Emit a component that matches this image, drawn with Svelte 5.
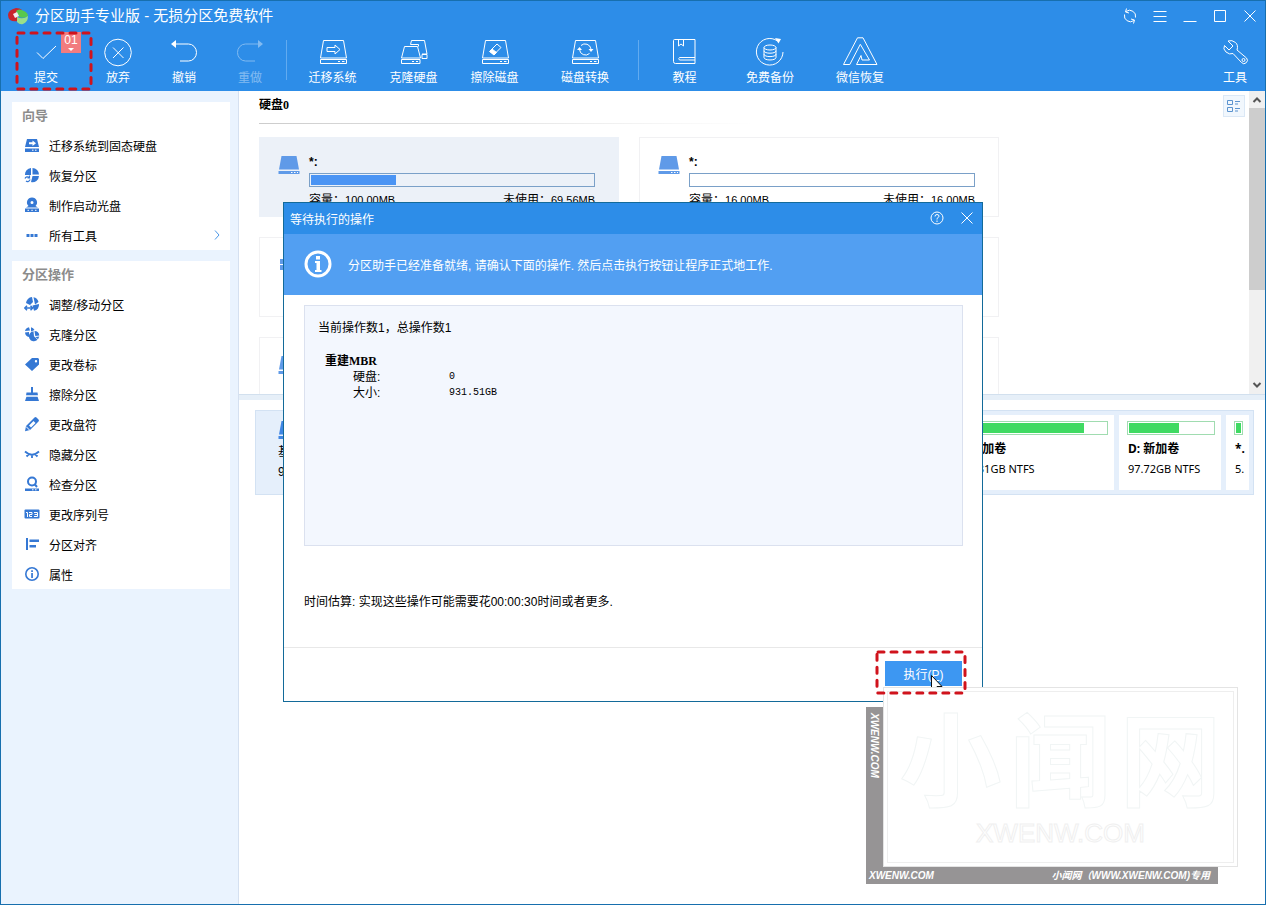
<script lang="ts">
  type Tool = { label: string; icon: string; size?: string; disabled?: boolean };

  const diskOutline = '<path d="M5.500 3.500h20l3 17.500h-26z"/><path d="M2.500 22.500h26v4h-26z"/><path d="M20 24.500h2M24 24.500h2.500"/>';

  const editTools: Tool[] = [
    { label: '放弃', icon: '<circle cx="15" cy="15.500" r="13.300"/><path d="M10 10.500l10.500 10.500M20.500 10.500L10 21"/>' },
    { label: '撤销', icon: '<path d="M5 7h14.500a8 8.500 0 0 1 0 17H11"/><path d="M2 7l5-4v8z" fill="#fff" stroke="none"/>' },
    { label: '重做', disabled: true, icon: '<path d="M25 7H10.500a8 8.500 0 0 0 0 17H20"/><path d="M28 7l-5-4v8z" fill="#fff" stroke="none"/>' },
  ];

  const diskTools: Tool[] = [
    { label: '迁移系统', size: 'medium', icon: diskOutline + '<path d="M9 10.500h8V8l5 4.500-5 4.500v-2.500H9z"/>' },
    { label: '克隆硬盘', size: 'medium', icon: '<path d="M5.500 9.500h13l3 11.500h-19z"/><path d="M2.500 22.500h18.500v4H2.500zM13 24.500h2M17 24.500h2"/><path d="M11.500 7.500l1-4h13l2.500 13.500h-5M19.500 9.500v-2h-8M23 17.500h5v4h-5z"/>' },
    { label: '擦除磁盘', size: 'medium', icon: diskOutline + '<path d="M10 14l7-7 4 3.500-7 7z"/><path d="M12 12l4.500 3.500-2.500 2.500-4.500-3.500z" fill="#fff"/>' },
    { label: '磁盘转换', size: 'wide', icon: diskOutline + '<path d="M11 8.500a6 6 0 0 1 10 3.500M19.500 16.500a6 6 0 0 1-10-4"/><path d="M18.500 12h5L21 15zM7 13l2.500-3 2.500 3z" fill="#fff" stroke="none"/>' },
  ];

  const helpTools: Tool[] = [
    { label: '教程', size: 'medium', icon: '<path d="M3.500 3.500q0-1 1-1h20.500v24H5.500q-2 0-2-2zM8.500 3v6l2.500-2 2.500 2V3M25 20.500H9.500q-1.500 1.200 0 2.500H25"/>' },
    { label: '免费备份', size: 'broad', icon: '<path d="M28 15A13.300 13.300 0 1 1 22.500 4"/><path d="M20 1l6 1-2.500 4.500z" fill="#fff" stroke="none"/><ellipse cx="15" cy="10.500" rx="6" ry="2.500"/><path d="M9 10.500v10c0 3.300 12 3.300 12 0v-10M9 13.800c0 3.200 12 3.200 12 0M9 17.200c0 3.200 12 3.200 12 0"/>' },
    { label: '微信恢复', size: 'broad', icon: '<path d="M12.500.8h5.500l14 26.700H11.500l4.500-9 1 4.500h7.500L15.300 7.300 4.800 27.500H-1.500z"/>' },
  ];

  const wizards = [
    { label: '迁移系统到固态硬盘', icon: '<path d="M3 2h10l2 8H1zM1 11.500h14v3.500H1z"/><path d="M5 5.300h3.500V3.500L12 6.300 8.500 9V7.300H5z" fill="#fff"/><path d="M8 13.200h1.500M11 13.200h1.500" stroke="#fff"/>' },
    { label: '恢复分区', icon: '<path d="M7 1v7H1A6.500 6.500 0 0 1 7 1zM8.500 1A6.500 6.500 0 0 1 15 7.500H8.500zM15 9a6.500 6.500 0 0 1-8 6l1.500-6z"/><path d="M1 11.500a2.500 2.500 0 0 1 4-1M6 12.500a2.500 2.500 0 0 1-4 1.500M5.500 8.500v2.500H3.500" fill="none" stroke="#3578d4" stroke-width="1.200"/>' },
    { label: '制作启动光盘', icon: '<path fill-rule="evenodd" d="M8 .5a5 5 0 0 1 3.500 8.600L14 10.500H2l2.500-1.400A5 5 0 0 1 8 .5zM8 4a1.500 1.500 0 1 0 0 3 1.500 1.500 0 0 0 0-3zM1 11.500h14V15H1z"/><path d="M3.500 13.300h1.500M7.300 13.300h1.500M11 13.300h1.500" stroke="#fff"/>' },
    { label: '所有工具', arrow: true, icon: '<path d="M2.500 7h3v3h-3zM6.500 7h3v3h-3zM10.500 7h3v3h-3z"/>' },
  ];

  const operations = [
    { label: '调整/移动分区', icon: '<path d="M2 7a6.500 6.500 0 0 1 6-6l1 5-3 3zM9.500 1.200A6.500 6.500 0 0 1 14.500 6L11 8.500zM15 8a6.500 6.500 0 0 1-5 6.800L8.500 9.500z"/><path d="M1 12h7M3 9.800L.8 12 3 14.200M6.500 9.800L8.700 12l-2.200 2.200" fill="none" stroke="#3578d4" stroke-width="1.500"/>' },
    { label: '克隆分区', icon: '<path d="M1 5a5 5 0 0 1 4-3.700l1 3.200zM7 1.300A5 5 0 0 1 10.500 4L7 5.500zM1 6.500L5 6v5A5 5 0 0 1 1 6.500zM10.500 5a5 5 0 0 1 4.800 4.500l-4 .5zM9.500 5.300l.5 5 3.500 3.500A5 5 0 1 1 9.500 5.300zM11.300 11l4-.5-1.300 2.700z"/>' },
    { label: '更改卷标', icon: '<path fill-rule="evenodd" d="M8 2h6l1 1v5.500l-7 6.500L1 8.500zM12 4a1.200 1.200 0 1 0 0 2.400A1.200 1.200 0 0 0 12 4z"/>' },
    { label: '擦除分区', icon: '<path d="M7 1h2v5.500h4.500l.5 3H2l.5-3H7zM2.500 10.500h11L15 15H1z"/><path d="M1.500 10h13" stroke="#fff"/>' },
    { label: '更改盘符', icon: '<path fill-rule="evenodd" d="M10.500 1.500Q11.500.5 12.500 1.500l2 2q1 1 0 2l-8.500 8.500-5 1.300 1-5.300zM9.500 5L5 9.500l2 2L11.500 7z"/><path d="M2 10.500L5.500 14" stroke="#fff"/>' },
    { label: '隐藏分区', icon: '<path d="M1 5.500q7 6.500 14 0M4.500 8.500l-2 2M11.500 8.500l2 2M8 9v3" fill="none" stroke="#3578d4" stroke-width="1.800"/>' },
    { label: '检查分区', icon: '<circle cx="8" cy="5.500" r="4" fill="none" stroke="#3578d4" stroke-width="2"/><path d="M10.500 8l2.500 3" stroke="#3578d4" stroke-width="2"/><path d="M1 12.500h14V15H1z"/><path d="M8 13.800h1.500M11 13.800h1.500" stroke="#fff"/>' },
    { label: '更改序列号', icon: '<rect x="0.500" y="3.500" width="15" height="9" rx="1"/><path d="M2 6.500h1.500V11M5 6.500h3v2H5.500v2H8M10 6.500h3.500v4H10M10.500 8.500h3" fill="none" stroke="#fff"/>' },
    { label: '分区对齐', icon: '<path d="M2 2h2v12H2zM5.500 3.500H15V6H5.500zM5.500 9H12v2.500H5.500z"/>' },
    { label: '属性', icon: '<circle cx="8" cy="8" r="6.200" fill="none" stroke="#3578d4" stroke-width="1.600"/><path d="M7.200 4.200h1.700v1.700H7.200zM7.200 7h1.700v5H7.200z"/>' },
  ];

  const cards = [
    { name: '*:', total: '100.00MB', free: '69.56MB', used: 30, selected: true },
    { name: '*:', total: '16.00MB', free: '16.00MB', used: 0 },
    { system: true },
    {},
    {},
    {},
  ];

  const partitions = [
    { name: 'C: 新加卷', size: '833.31GB NTFS', used: 85, kind: 'large' },
    { name: 'D: 新加卷', size: '97.72GB NTFS', used: 60, kind: 'middle' },
    { name: '*.', size: '5.', used: 100, kind: 'tiny' },
  ];
</script>

{#snippet toolButton(tool: Tool)}
  <button class="tool {tool.size ?? ''}" disabled={tool.disabled}>
    <svg viewBox="0 0 30 30" aria-hidden="true">{@html tool.icon}</svg>
    <span>{tool.label}</span>
  </button>
{/snippet}

{#snippet driveIcon()}
  <svg class="drive" viewBox="0 0 22 18" aria-hidden="true">
    <path d="M3.500 0h15L21 13.500H1zM.5 15h21v3H.5z" />
    <path d="M13 16.500h1.500M16 16.500h1.500M19 16.500h1" stroke="#fff" />
  </svg>
{/snippet}

{#snippet marker()}
  <svg class="marker" aria-hidden="true"><rect x="2" y="2" rx="1" /></svg>
{/snippet}

<div class="app">
  <header>
    <div class="titlebar">
      <svg class="logo" viewBox="0 0 20 18" aria-hidden="true">
        <path d="M0 8q0-5 8-7 4 0 6 2L9 8l1 6q-5 1-8-1Q0 11 0 8z" fill="#c9252c" />
        <path d="M8 4q3-3 8 0 4 2 4 5-4 3-9 1z" fill="#58c84c" />
        <path d="M9 10q6 3 11-1 0 6-5 8-3 1-6-2z" fill="#9adf8a" />
        <path d="M5 7l4-2 2 4-4 2z" fill="#f3eeee" />
      </svg>
      <h1>分区助手专业版 - 无损分区免费软件</h1>
      <div class="window-controls">
        <button aria-label="刷新"><svg viewBox="0 0 16 16"><path d="M4 3.500a6 6 0 0 1 9.500 6M2.500 6.500a6 6 0 0 0 9.500 6M4.500.5L3.500 4l3.500 1M11.500 15.500l1-3.500-3.500-1" /></svg></button>
        <button aria-label="菜单"><svg viewBox="0 0 16 16"><path d="M1.500 3.500h13M1.500 8.500h13M1.500 13.500h13" /></svg></button>
        <button aria-label="最小化"><svg viewBox="0 0 16 16"><path d="M1.500 13.500h13" /></svg></button>
        <button aria-label="最大化"><svg viewBox="0 0 16 16"><path d="M2.500 2.500h11v11h-11z" /></svg></button>
        <button aria-label="关闭"><svg viewBox="0 0 16 16"><path d="M2.500 2.500l11 11M13.500 2.500l-11 11" /></svg></button>
      </div>
    </div>

    <nav class="toolbar">
      <button class="tool commit">
        <svg viewBox="0 0 30 30" aria-hidden="true"><path d="M6 15.500l6 6L25 9" /></svg>
        <span>提交</span>
        <b class="badge">01<svg viewBox="0 0 8 4"><path d="M0 0h8L4 4z" /></svg></b>
        {@render marker()}
      </button>
      {#each editTools as tool}{@render toolButton(tool)}{/each}
      <i class="separator"></i>
      {#each diskTools as tool}{@render toolButton(tool)}{/each}
      <i class="separator"></i>
      {#each helpTools as tool}{@render toolButton(tool)}{/each}
      <button class="tool settings">
        <svg viewBox="0 0 30 30" aria-hidden="true">
          <path d="M8 4l5 5-4 4-4.500-4.500Q2.500 12 6 15q3.500 3 7 1.500L21.500 25.500a3.200 3.200 0 0 0 5-4.500L17 13q1.500-5-1.500-7.500Q12 2.500 8 4z" />
          <circle cx="23.500" cy="23" r="1.500" />
        </svg>
        <span>工具</span>
      </button>
    </nav>
  </header>

  <div class="body">
    <aside>
      <section>
        <h2>向导</h2>
        {#each wizards as item}
          <button class="side-item">
            <svg viewBox="0 0 16 16" aria-hidden="true">{@html item.icon}</svg>
            {item.label}
            {#if item.arrow}<svg class="arrow" viewBox="0 0 6 10" aria-hidden="true"><path d="M1 .5L5 5 1 9.500" /></svg>{/if}
          </button>
        {/each}
      </section>
      <section>
        <h2>分区操作</h2>
        {#each operations as item}
          <button class="side-item">
            <svg viewBox="0 0 16 16" aria-hidden="true">{@html item.icon}</svg>
            {item.label}
          </button>
        {/each}
      </section>
    </aside>

    <main>
      <div class="volumes">
        <div class="volume-list">
          <div class="volume-head">
            <h3>硬盘0</h3>
            <button class="view-toggle" aria-label="切换视图">
              <svg viewBox="0 0 16 16"><path d="M1.500 2.500h5v4h-5zM1.500 9.500h5v4h-5zM9 3.500h5M9 6h3M9 10.500h5M9 13h3" /></svg>
            </button>
          </div>
          <hr />
          <div class="cards">
            {#each cards as card}
              <article class:selected={card.selected}>
                {#if card.system}
                  <svg class="drive" viewBox="0 0 22 18" aria-hidden="true"><path d="M2 3h5v5H2zM8 2h7v6H8zM2 9h5v5H2zM8 9h7v6H8z" /></svg>
                {:else}
                  {@render driveIcon()}
                {/if}
                {#if card.name}
                  <div class="info">
                    <b>{card.name}</b>
                    <div class="meter"><i style="width: {card.used}%"></i></div>
                    <p>
                      <span>容量：<small>{card.total}</small></span>
                      <span>未使用：<small>{card.free}</small></span>
                    </p>
                  </div>
                {/if}
              </article>
            {/each}
          </div>
        </div>
        <div class="scrollbar">
          <button aria-label="向上"><svg viewBox="0 0 10 6"><path d="M1.500 5L5 1.500 8.500 5" /></svg></button>
          <i class="thumb"></i>
          <button class="down" aria-label="向下"><svg viewBox="0 0 10 6"><path d="M1.500 1L5 4.500 8.500 1" /></svg></button>
        </div>
      </div>

      <div class="splitter"></div>

      <div class="map-pane">
        <div class="disk-map">
          <div class="disk">
            {@render driveIcon()}
            <strong>基本</strong>
            <span>931.51GB</span>
          </div>
          {#each partitions as part}
            <div class="partition {part.kind}">
              <div class="meter green"><i style="width: {part.used}%"></i></div>
              <b>{part.name}</b>
              <span>{part.size}</span>
            </div>
          {/each}
        </div>
      </div>
    </main>
  </div>

  <div class="overlay">
    <div class="dialog" role="dialog" aria-labelledby="dialog-title">
      <div class="dialog-title">
        <h2 id="dialog-title">等待执行的操作</h2>
        <button aria-label="帮助"><svg viewBox="0 0 16 16"><circle cx="8" cy="8" r="6" /><path d="M6 6.500q0-2 2-2t2 1.700q0 1-2 2.300v1M8 10.500V12" /></svg></button>
        <button aria-label="关闭"><svg viewBox="0 0 16 16"><path d="M2.500 2.500l11 11M13.500 2.500l-11 11" /></svg></button>
      </div>
      <div class="banner">
        <svg viewBox="0 0 28 28" aria-hidden="true">
          <circle cx="14" cy="14" r="12" />
          <path d="M12 6h4v3.500h-4zM11 11h5v9h1.500v2H11v-2h1.500v-7H11z" />
        </svg>
        <p>分区助手已经准备就绪, 请确认下面的操作. 然后点击执行按钮让程序正式地工作.</p>
      </div>
      <div class="dialog-body">
        <div class="pending">
          <p>当前操作数1，总操作数1</p>
          <h3>重建MBR</h3>
          <dl>
            <dt>硬盘:</dt>
            <dd>0</dd>
            <dt>大小:</dt>
            <dd>931.51GB</dd>
          </dl>
        </div>
        <p class="estimate">时间估算: 实现这些操作可能需要花00:00:30时间或者更多.</p>
      </div>
      <footer>
        <button class="execute">
          执行(<u>P</u>)
          <svg class="cursor" viewBox="0 0 12 18" aria-hidden="true"><path d="M.5.5v15l3.500-3.500 2.500 5.500 2-1-2.500-5h5z" /></svg>
          {@render marker()}
        </button>
      </footer>
    </div>
  </div>

  <div class="watermark" aria-hidden="true">
    <span class="strip-side">XWENW.COM</span>
    <div class="plate">
      <div class="plate-name"><span>小</span><span>闻</span><span>网</span></div>
      <div class="plate-site">XWENW.COM</div>
    </div>
    <div class="strip"><span>XWENW.COM</span><span>小闻网（WWW.XWENW.COM)专用</span></div>
  </div>
</div>

<style>
  :global(body) {
    margin: 0;
  }

  .app {
    --blue: #2d8de8;
    --icon: #3578d4;
    box-sizing: border-box;
    position: relative;
    display: flex;
    flex-direction: column;
    min-height: 100vh;
    overflow: hidden;
    border: 1px solid #176fae;
    background: #fff;
    color: #000;
    font-family: 'Liberation Sans', 'Noto Sans CJK SC', sans-serif;
    font-size: 12px;
  }

  h1, h2, h3, p, dl, dd {
    margin: 0;
    font-weight: normal;
  }

  button {
    padding: 0;
    border: 0;
    background: none;
    color: inherit;
    font: inherit;
  }

  /* Title bar and toolbar */
  header {
    background: var(--blue);
    color: #fff;
  }

  header svg {
    fill: none;
    stroke: #fff;
  }

  .titlebar {
    display: flex;
    align-items: center;
    height: 30px;
    padding-left: 7px;
  }

  .titlebar .logo {
    width: 20px;
    height: 18px;
    stroke: none;
  }

  h1 {
    margin-left: 7px;
    font-size: 15px;
    line-height: 30px;
  }

  .window-controls {
    display: flex;
    margin-left: auto;
  }

  .window-controls button {
    display: grid;
    place-items: center;
    width: 30px;
    height: 30px;
  }

  .window-controls svg {
    width: 16px;
    height: 16px;
  }

  .toolbar {
    display: flex;
    height: 60px;
    padding-left: 14px;
  }

  .tool {
    position: relative;
    display: flex;
    flex-direction: column;
    align-items: center;
    width: 66px;
    padding-top: 6px;
    line-height: 22px;
  }

  .tool > svg {
    width: 30px;
    height: 30px;
    overflow: visible;
  }

  .tool:disabled {
    color: #fff;
    opacity: 0.4;
  }

  .tool.medium {
    width: 81px;
  }

  .tool.broad {
    width: 90px;
  }

  .tool.wide {
    width: 100px;
  }

  .tool.commit {
    width: 70px;
    padding-right: 8px;
  }

  .tool.settings {
    width: 60px;
    margin-left: auto;
  }

  .separator {
    width: 1px;
    height: 40px;
    margin: 9px 5px 0 3px;
    background: #62abf0;
  }

  .badge {
    position: absolute;
    top: 1px;
    right: 4px;
    display: flex;
    flex-direction: column;
    align-items: center;
    width: 20px;
    height: 21px;
    background: #f27c7f;
    font-weight: normal;
    line-height: 16px;
  }

  .badge svg {
    width: 6px;
    height: 3px;
    fill: #fff;
    stroke: none;
  }

  /* Red dashed callouts */
  .marker {
    position: absolute;
    z-index: 3;
    overflow: visible;
  }

  .marker rect {
    width: calc(100% - 4px);
    height: calc(100% - 4px);
    fill: none;
    stroke: #d0131c;
    stroke-width: 3;
    stroke-dasharray: 6 7;
    stroke-linecap: round;
  }

  .commit .marker {
    top: 0;
    left: 0;
    width: 78px;
    height: 60px;
  }

  /* Sidebar */
  .body {
    flex: 1;
    display: flex;
  }

  aside {
    box-sizing: border-box;
    display: flex;
    flex-direction: column;
    flex: 0 0 238px;
    gap: 11px;
    padding: 11px 8px 0 11px;
    border-right: 1px solid #d5e0f0;
    background: #eaf3fe;
  }

  aside section {
    background: #fff;
  }

  aside h2 {
    padding-left: 10px;
    color: #8c8c8c;
    font-size: 13px;
    font-weight: bold;
    line-height: 28px;
  }

  .side-item {
    display: flex;
    align-items: center;
    gap: 9px;
    width: 100%;
    height: 30px;
    padding: 0 10px 0 12px;
    text-align: left;
  }

  .side-item svg {
    width: 16px;
    height: 16px;
    fill: var(--icon);
  }

  .side-item .arrow {
    width: 6px;
    height: 10px;
    margin-left: auto;
    fill: none;
    stroke: #4b98e8;
  }

  /* Volume cards */
  main {
    flex: 1;
    display: flex;
    flex-direction: column;
    min-width: 0;
  }

  .volumes {
    flex: 3 3 0;
    display: flex;
    min-height: 0;
    overflow: hidden;
  }

  .volume-list {
    flex: 1;
    height: 0;
    padding-left: 20px;
  }

  .volume-head {
    display: flex;
    justify-content: space-between;
    padding: 4px 4px 0 0;
  }

  h3 {
    font-family: 'Liberation Serif', 'Noto Sans CJK SC', serif;
    font-size: 12px;
    font-weight: bold;
    line-height: 20px;
  }

  .view-toggle {
    box-sizing: border-box;
    display: grid;
    place-items: center;
    width: 22px;
    height: 22px;
    border: 1px solid #dbe8f6;
    background: #f1f7fd;
  }

  .view-toggle svg {
    width: 16px;
    height: 16px;
    fill: none;
    stroke: #5b93cf;
  }

  hr {
    width: 50%;
    height: 1px;
    margin: 6px 0 0;
    border: 0;
    background: linear-gradient(to right, #ccc, #fff);
  }

  .cards {
    display: grid;
    grid-template-columns: repeat(auto-fill, 360px);
    gap: 20px;
    margin-top: 13px;
  }

  article {
    box-sizing: border-box;
    display: flex;
    gap: 9px;
    height: 80px;
    padding: 14px 23px 0 18px;
    border: 1px solid #f1f1f3;
  }

  article.selected {
    border-color: #ecf1f8;
    background: #ecf1f8;
  }

  .drive {
    flex: none;
    width: 22px;
    height: 18px;
    fill: #5f9ae8;
  }

  article .drive {
    margin-top: 4px;
  }

  .info {
    flex: 1;
  }

  .info b {
    display: block;
    line-height: 21px;
  }

  .info p {
    display: flex;
    justify-content: space-between;
    line-height: 26px;
  }

  .info small {
    font-size: 11px;
  }

  .meter {
    box-sizing: border-box;
    height: 14px;
    padding: 1px;
    border: 1px solid #7aa0c8;
  }

  .meter i {
    display: block;
    height: 100%;
    background: #4a94f4;
  }

  .meter.green {
    border-color: #a0dcb0;
  }

  .meter.green i {
    background: #3fda62;
  }

  .scrollbar {
    display: flex;
    flex-direction: column;
    width: 16px;
    background: #f0f0f0;
  }

  .scrollbar button {
    display: grid;
    place-items: center;
    height: 17px;
  }

  .scrollbar .down {
    margin-top: auto;
  }

  .scrollbar svg {
    width: 10px;
    height: 6px;
    fill: none;
    stroke: #555;
    stroke-width: 2;
  }

  .thumb {
    height: 60%;
    background: #cdcdcd;
  }

  .splitter {
    height: 5px;
    border-top: 1px solid #d2e0ee;
    background: #e6eff8;
  }

  /* Disk map */
  .map-pane {
    flex: 5 5 0;
  }

  .disk-map {
    display: flex;
    gap: 5px;
    margin: 10px 11px 0 16px;
    padding: 4px 4px 4px 0;
    border: 1px solid #d3e2f3;
    background: #e5effb;
    line-height: 20px;
  }

  .disk {
    flex: 1;
    display: flex;
    flex-direction: column;
    padding: 6px 0 0 22px;
  }

  .disk strong {
    margin-top: 3px;
    font-weight: normal;
  }

  .disk .drive {
    fill: #3f86e4;
  }

  .partition {
    box-sizing: border-box;
    display: flex;
    flex-direction: column;
    min-height: 75px;
    padding: 6px 6px 0 8px;
    overflow: hidden;
    background: #fff;
    font-family: 'Noto Sans', 'Noto Sans CJK SC', sans-serif;
    font-size: 11px;
    white-space: nowrap;
  }

  .partition b {
    margin-top: 4px;
    padding-left: 1px;
    font-size: 12px;
  }

  .partition span {
    padding-left: 1px;
  }

  .partition.large {
    width: 167px;
  }

  .partition.middle {
    width: 102px;
  }

  .partition.tiny {
    width: 23px;
  }

  /* Pending operations dialog */
  .overlay {
    position: absolute;
    inset: 0;
    display: grid;
    place-items: center;
    padding-bottom: 2px;
  }

  .dialog {
    box-sizing: border-box;
    width: min(700px, 90%);
    border: 1px solid #136a99;
    background: #fff;
  }

  .dialog-title {
    display: flex;
    align-items: center;
    height: 31px;
    padding-left: 6px;
    background: var(--blue);
    color: #fff;
  }

  .dialog-title h2 {
    flex: 1;
    font-size: 12px;
  }

  .dialog-title button {
    display: grid;
    place-items: center;
    width: 30px;
    height: 30px;
  }

  .dialog-title svg {
    width: 16px;
    height: 16px;
    fill: none;
    stroke: #fff;
  }

  .banner {
    display: flex;
    align-items: center;
    gap: 16px;
    height: 61px;
    padding-left: 20px;
    background: #529ff2;
    color: #fff;
  }

  .banner svg {
    width: 28px;
    height: 28px;
    fill: #fff;
  }

  .banner circle {
    fill: none;
    stroke: #fff;
    stroke-width: 3;
  }

  .dialog-body {
    padding: 10px 19px 36px 20px;
  }

  .pending {
    box-sizing: border-box;
    min-height: 241px;
    padding: 13px;
    border: 1px solid #dbe1ef;
    background: #f3f7fe;
  }

  .pending p {
    line-height: 18px;
  }

  .pending h3 {
    margin-top: 16px;
    padding-left: 7px;
    line-height: 16px;
  }

  .pending dl {
    display: grid;
    grid-template-columns: 96px 1fr;
    padding-left: 35px;
    line-height: 16px;
  }

  .pending dd {
    font-family: 'Liberation Mono', monospace;
    font-size: 10px;
  }

  .estimate {
    margin-top: 47px;
    line-height: 18px;
  }

  footer {
    display: flex;
    justify-content: flex-end;
    padding: 13px 20px 15px;
    border-top: 1px solid #e8e8e8;
  }

  .execute {
    position: relative;
    width: 77px;
    height: 25px;
    background: #3d97f2;
    color: #fff;
  }

  .execute .marker {
    top: -11px;
    left: -10px;
    width: 92px;
    height: 45px;
  }

  .cursor {
    position: absolute;
    top: 14px;
    left: 46px;
    width: 12px;
    height: 18px;
    fill: #fff;
    stroke: #111;
  }

  /* Site watermark */
  .watermark {
    position: absolute;
    right: 27px;
    bottom: 20px;
    z-index: 2;
    display: grid;
    grid-template-columns: 17px 355px;
    grid-template-rows: 180px 17px;
    color: #fff;
    font-size: 10px;
    font-style: italic;
    font-weight: bold;
  }

  .strip-side {
    margin-top: 20px;
    padding-top: 6px;
    background: #969495;
    line-height: 17px;
    writing-mode: vertical-rl;
  }

  .plate {
    display: flex;
    flex-direction: column;
    align-items: center;
    border: 1px solid #e4e4e4;
    outline: 1px solid #eee;
    outline-offset: -5px;
    background: #fff;
    font-style: normal;
  }

  .plate-name {
    display: flex;
    gap: 8px;
    margin-top: 22px;
    color: #fff;
    font-size: 102px;
    line-height: 108px;
    -webkit-text-stroke: 1px #f1f5f5;
  }

  .plate-site {
    color: #fff;
    font-size: 26px;
    font-weight: normal;
    line-height: 30px;
    -webkit-text-stroke: 1px #f0f0f0;
  }

  .strip {
    grid-column: 1 / 3;
    display: flex;
    justify-content: space-between;
    margin-right: 20px;
    padding: 0 8px 0 3px;
    background: #969495;
    line-height: 18px;
  }
</style>
